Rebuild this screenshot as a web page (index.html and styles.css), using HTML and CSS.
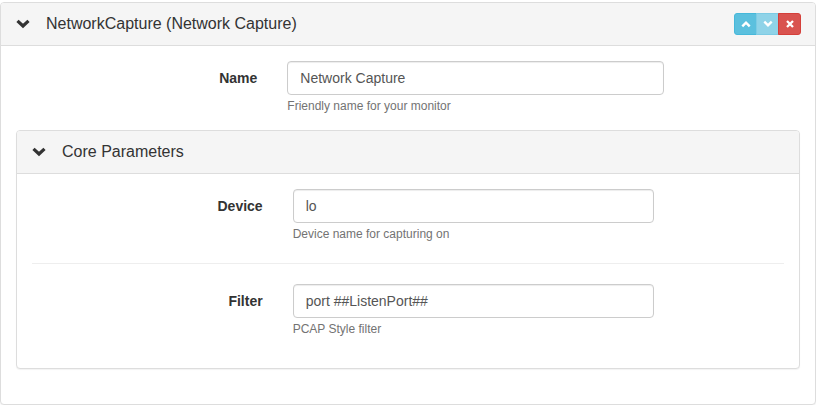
FILE: index.html
```html
<!DOCTYPE html>
<html>
<head>
<meta charset="utf-8">
<link rel="stylesheet" href="styles.css">
</head>
<body>
<div class="panel outer">
  <div class="panel-heading outer-heading">
    <div class="title">
      <svg class="chev" width="14" height="10" viewBox="0 0 14 10"><polyline points="1.5,1.8 7,7 12.5,1.8" fill="none" stroke="#333" stroke-width="3.2"/></svg>
      <span>NetworkCapture (Network Capture)</span>
    </div>
    <div class="btn-group">
      <span class="btn btn-info"><svg width="10" height="8" viewBox="0 0 10 8"><polyline points="1.3,6.3 5,2.6 8.7,6.3" fill="none" stroke="#fff" stroke-width="2.4"/></svg></span>
      <span class="btn btn-info disabled"><svg width="10" height="8" viewBox="0 0 10 8"><polyline points="1.3,1.7 5,5.4 8.7,1.7" fill="none" stroke="#fff" stroke-width="2.4"/></svg></span>
      <span class="btn btn-danger"><svg width="8" height="8" viewBox="0 0 8 8"><path d="M1,1 L7,7 M7,1 L1,7" fill="none" stroke="#fff" stroke-width="2.3"/></svg></span>
    </div>
  </div>
  <div class="panel-body">
    <div class="form-group">
      <label class="col-label">Name</label>
      <div class="col-input">
        <div class="form-control">Network Capture</div>
        <div class="help-block">Friendly name for your monitor</div>
      </div>
    </div>

    <div class="panel inner">
      <div class="panel-heading inner-heading">
        <div class="title">
          <svg class="chev" width="14" height="10" viewBox="0 0 14 10"><polyline points="1.5,1.8 7,7 12.5,1.8" fill="none" stroke="#333" stroke-width="3.2"/></svg>
          <span>Core Parameters</span>
        </div>
      </div>
      <div class="panel-body">
        <div class="form-group">
          <label class="col-label">Device</label>
          <div class="col-input">
            <div class="form-control">lo</div>
            <div class="help-block">Device name for capturing on</div>
          </div>
        </div>
        <hr>
        <div class="form-group">
          <label class="col-label">Filter</label>
          <div class="col-input">
            <div class="form-control">port ##ListenPort##</div>
            <div class="help-block">PCAP Style filter</div>
          </div>
        </div>
      </div>
    </div>
  </div>
</div>
</body>
</html>
```

FILE: styles.css
```css
* { box-sizing: border-box; }
html, body { margin: 0; padding: 0; background: #fff; }
body {
  font-family: "Liberation Sans", Arial, sans-serif;
  font-size: 14px;
  line-height: 1.42857;
  color: #333;
  padding-top: 2px;
}
.panel {
  background: #fff;
  border: 1px solid #ddd;
  border-radius: 4px;
  box-shadow: 0 1px 1px rgba(0,0,0,.05);
}
.outer { width: 816px; }
.panel-heading {
  background: #f5f5f5;
  border-bottom: 1px solid #ddd;
  border-radius: 3px 3px 0 0;
  display: flex;
  align-items: center;
  justify-content: space-between;
  padding: 0 14px 0 15px;
  height: 43px;
}
.title {
  display: flex;
  align-items: center;
  font-size: 16px;
  color: #333;
}
.chev { margin-right: 16px; display: block; }
.btn-group { display: flex; }
.btn {
  display: flex;
  align-items: center;
  justify-content: center;
  width: 23px;
  height: 22px;
  border: 1px solid;
}
.btn + .btn { margin-left: -1px; }
.btn-info { background: #5bc0de; border-color: #46b8da; }
.btn-info:first-child { border-radius: 3px 0 0 3px; }
.btn-info.disabled { background: #8fd3e8; border-color: #7dcbe4; }
.btn-danger { background: #d9534f; border-color: #d43f3a; border-radius: 0 3px 3px 0; }
.panel-body { padding: 15px; }
.form-group {
  display: grid;
  grid-template-columns: 33.3333% 50%;
  margin: 0 -15px;
}
.col-label {
  padding: 8px 15px 0;
  text-align: right;
  font-weight: bold;
  color: #333;
}
.col-input { padding: 0 15px; }
.form-control {
  height: 34px;
  padding: 7px 12px 5px;
  border: 1px solid #ccc;
  border-radius: 4px;
  color: #555;
  box-shadow: inset 0 1px 1px rgba(0,0,0,.075);
  background: #fff;
}
.help-block {
  margin-top: 3px;
  margin-bottom: 15px;
  font-size: 12px;
  line-height: 17px;
  color: #737373;
}
.inner { margin-bottom: 20px; }
hr {
  border: 0;
  border-top: 1px solid #eee;
  margin: 5px 0 20px;
}
```
